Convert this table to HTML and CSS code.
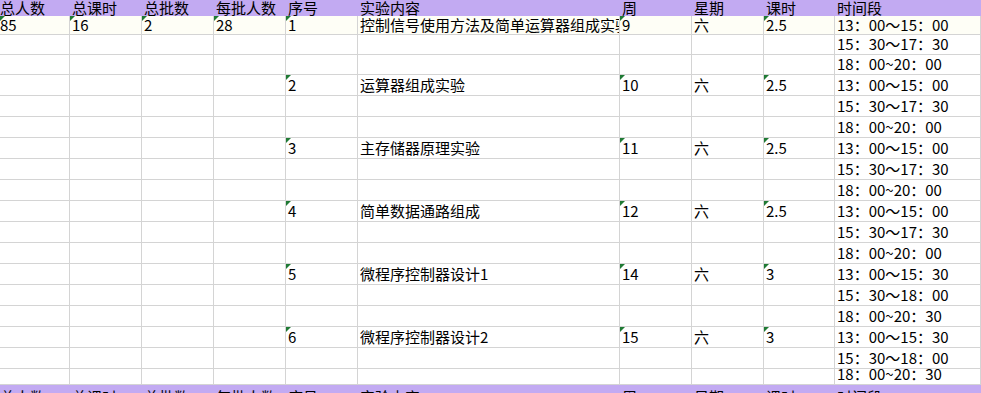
FILE: index.html
```html
<!DOCTYPE html>
<html lang="zh-CN">
<head>
<meta charset="utf-8">
<title>实验安排</title>
<link rel="stylesheet" href="styles.css">
</head>
<body>
<div class="sheet">
  <div class="head">
    <div class="h first">总人数</div><div class="h">总课时</div><div class="h">总批数</div><div class="h">每批人数</div><div class="h">序号</div><div class="h">实验内容</div><div class="h">周</div><div class="h">星期</div><div class="h">课时</div><div class="h">时间段</div>
  </div>
  <div class="grid">
    <!-- group 1 -->
    <div class="c first hl t">85</div><div class="c hl t">16</div><div class="c hl t">2</div><div class="c hl t">28</div><div class="c hl t">1</div><div class="c hl">控制信号使用方法及简单运算器组成实验</div><div class="c hl t">9</div><div class="c hl">六</div><div class="c hl t">2.5</div><div class="c hl">13：00～15：00</div>
    <div class="c first"></div><div class="c"></div><div class="c"></div><div class="c"></div><div class="c"></div><div class="c"></div><div class="c"></div><div class="c"></div><div class="c"></div><div class="c">15：30～17：30</div>
    <div class="c first"></div><div class="c"></div><div class="c"></div><div class="c"></div><div class="c"></div><div class="c"></div><div class="c"></div><div class="c"></div><div class="c"></div><div class="c">18：00~20：00</div>
    <!-- group 2 -->
    <div class="c first"></div><div class="c"></div><div class="c"></div><div class="c"></div><div class="c t">2</div><div class="c">运算器组成实验</div><div class="c t">10</div><div class="c">六</div><div class="c t">2.5</div><div class="c">13：00～15：00</div>
    <div class="c first"></div><div class="c"></div><div class="c"></div><div class="c"></div><div class="c"></div><div class="c"></div><div class="c"></div><div class="c"></div><div class="c"></div><div class="c">15：30～17：30</div>
    <div class="c first"></div><div class="c"></div><div class="c"></div><div class="c"></div><div class="c"></div><div class="c"></div><div class="c"></div><div class="c"></div><div class="c"></div><div class="c">18：00~20：00</div>
    <!-- group 3 -->
    <div class="c first"></div><div class="c"></div><div class="c"></div><div class="c"></div><div class="c t">3</div><div class="c">主存储器原理实验</div><div class="c t">11</div><div class="c">六</div><div class="c t">2.5</div><div class="c">13：00～15：00</div>
    <div class="c first"></div><div class="c"></div><div class="c"></div><div class="c"></div><div class="c"></div><div class="c"></div><div class="c"></div><div class="c"></div><div class="c"></div><div class="c">15：30～17：30</div>
    <div class="c first"></div><div class="c"></div><div class="c"></div><div class="c"></div><div class="c"></div><div class="c"></div><div class="c"></div><div class="c"></div><div class="c"></div><div class="c">18：00~20：00</div>
    <!-- group 4 -->
    <div class="c first"></div><div class="c"></div><div class="c"></div><div class="c"></div><div class="c t">4</div><div class="c">简单数据通路组成</div><div class="c t">12</div><div class="c">六</div><div class="c t">2.5</div><div class="c">13：00～15：00</div>
    <div class="c first"></div><div class="c"></div><div class="c"></div><div class="c"></div><div class="c"></div><div class="c"></div><div class="c"></div><div class="c"></div><div class="c"></div><div class="c">15：30～17：30</div>
    <div class="c first"></div><div class="c"></div><div class="c"></div><div class="c"></div><div class="c"></div><div class="c"></div><div class="c"></div><div class="c"></div><div class="c"></div><div class="c">18：00~20：00</div>
    <!-- group 5 -->
    <div class="c first"></div><div class="c"></div><div class="c"></div><div class="c"></div><div class="c t">5</div><div class="c">微程序控制器设计1</div><div class="c t">14</div><div class="c">六</div><div class="c t">3</div><div class="c">13：00～15：30</div>
    <div class="c first"></div><div class="c"></div><div class="c"></div><div class="c"></div><div class="c"></div><div class="c"></div><div class="c"></div><div class="c"></div><div class="c"></div><div class="c">15：30～18：00</div>
    <div class="c first"></div><div class="c"></div><div class="c"></div><div class="c"></div><div class="c"></div><div class="c"></div><div class="c"></div><div class="c"></div><div class="c"></div><div class="c">18：00~20：30</div>
    <!-- group 6 -->
    <div class="c first"></div><div class="c"></div><div class="c"></div><div class="c"></div><div class="c t">6</div><div class="c">微程序控制器设计2</div><div class="c t">15</div><div class="c">六</div><div class="c t">3</div><div class="c">13：00～15：30</div>
    <div class="c first"></div><div class="c"></div><div class="c"></div><div class="c"></div><div class="c"></div><div class="c"></div><div class="c"></div><div class="c"></div><div class="c"></div><div class="c">15：30～18：00</div>
    <div class="c first"></div><div class="c"></div><div class="c"></div><div class="c"></div><div class="c"></div><div class="c"></div><div class="c"></div><div class="c"></div><div class="c"></div><div class="c">18：00~20：30</div>
  </div>
  <div class="head foot">
    <div class="h first">总人数</div><div class="h">总课时</div><div class="h">总批数</div><div class="h">每批人数</div><div class="h">序号</div><div class="h">实验内容</div><div class="h">周</div><div class="h">星期</div><div class="h">课时</div><div class="h">时间段</div>
  </div>
</div>
</body>
</html>
```

FILE: styles.css
```css
html, body {
  margin: 0;
  padding: 0;
  background: #ffffff;
  overflow: hidden;
}

.sheet {
  width: 981px;
  font-family: "Noto Sans CJK SC", "Noto Sans", sans-serif;
  font-size: 15px;
  color: #000000;
}

.head,
.grid {
  display: grid;
  grid-template-columns: 70px 72px 72px 72px 72px 262px 72px 72px 71px 146px;
}

.head {
  background: #c2aaf2;
  height: 16px;
  overflow: hidden;
}

.h {
  line-height: 16px;
  padding-left: 2px;
  white-space: nowrap;
  overflow: hidden;
}

.h.first,
.c.first {
  padding-left: 0;
}

.foot {
  padding-top: 4px;
  height: 8px;
}

.grid {
  grid-template-rows: 19px 20px 20px repeat(14, 21px) 16px;
}

.c {
  position: relative;
  box-sizing: border-box;
  border-right: 1px solid #d4d4d4;
  border-bottom: 1px solid #d4d4d4;
  display: flex;
  align-items: flex-end;
  padding: 0 0 2px 2px;
  line-height: 17px;
  white-space: nowrap;
  overflow: hidden;
}

.c.hl {
  background: #fefef6;
  padding-bottom: 1px;
}

.c.t::before {
  content: "";
  position: absolute;
  top: 0;
  left: 0;
  width: 0;
  height: 0;
  border-top: 5px solid #1f7a34;
  border-right: 5px solid transparent;
}
```
